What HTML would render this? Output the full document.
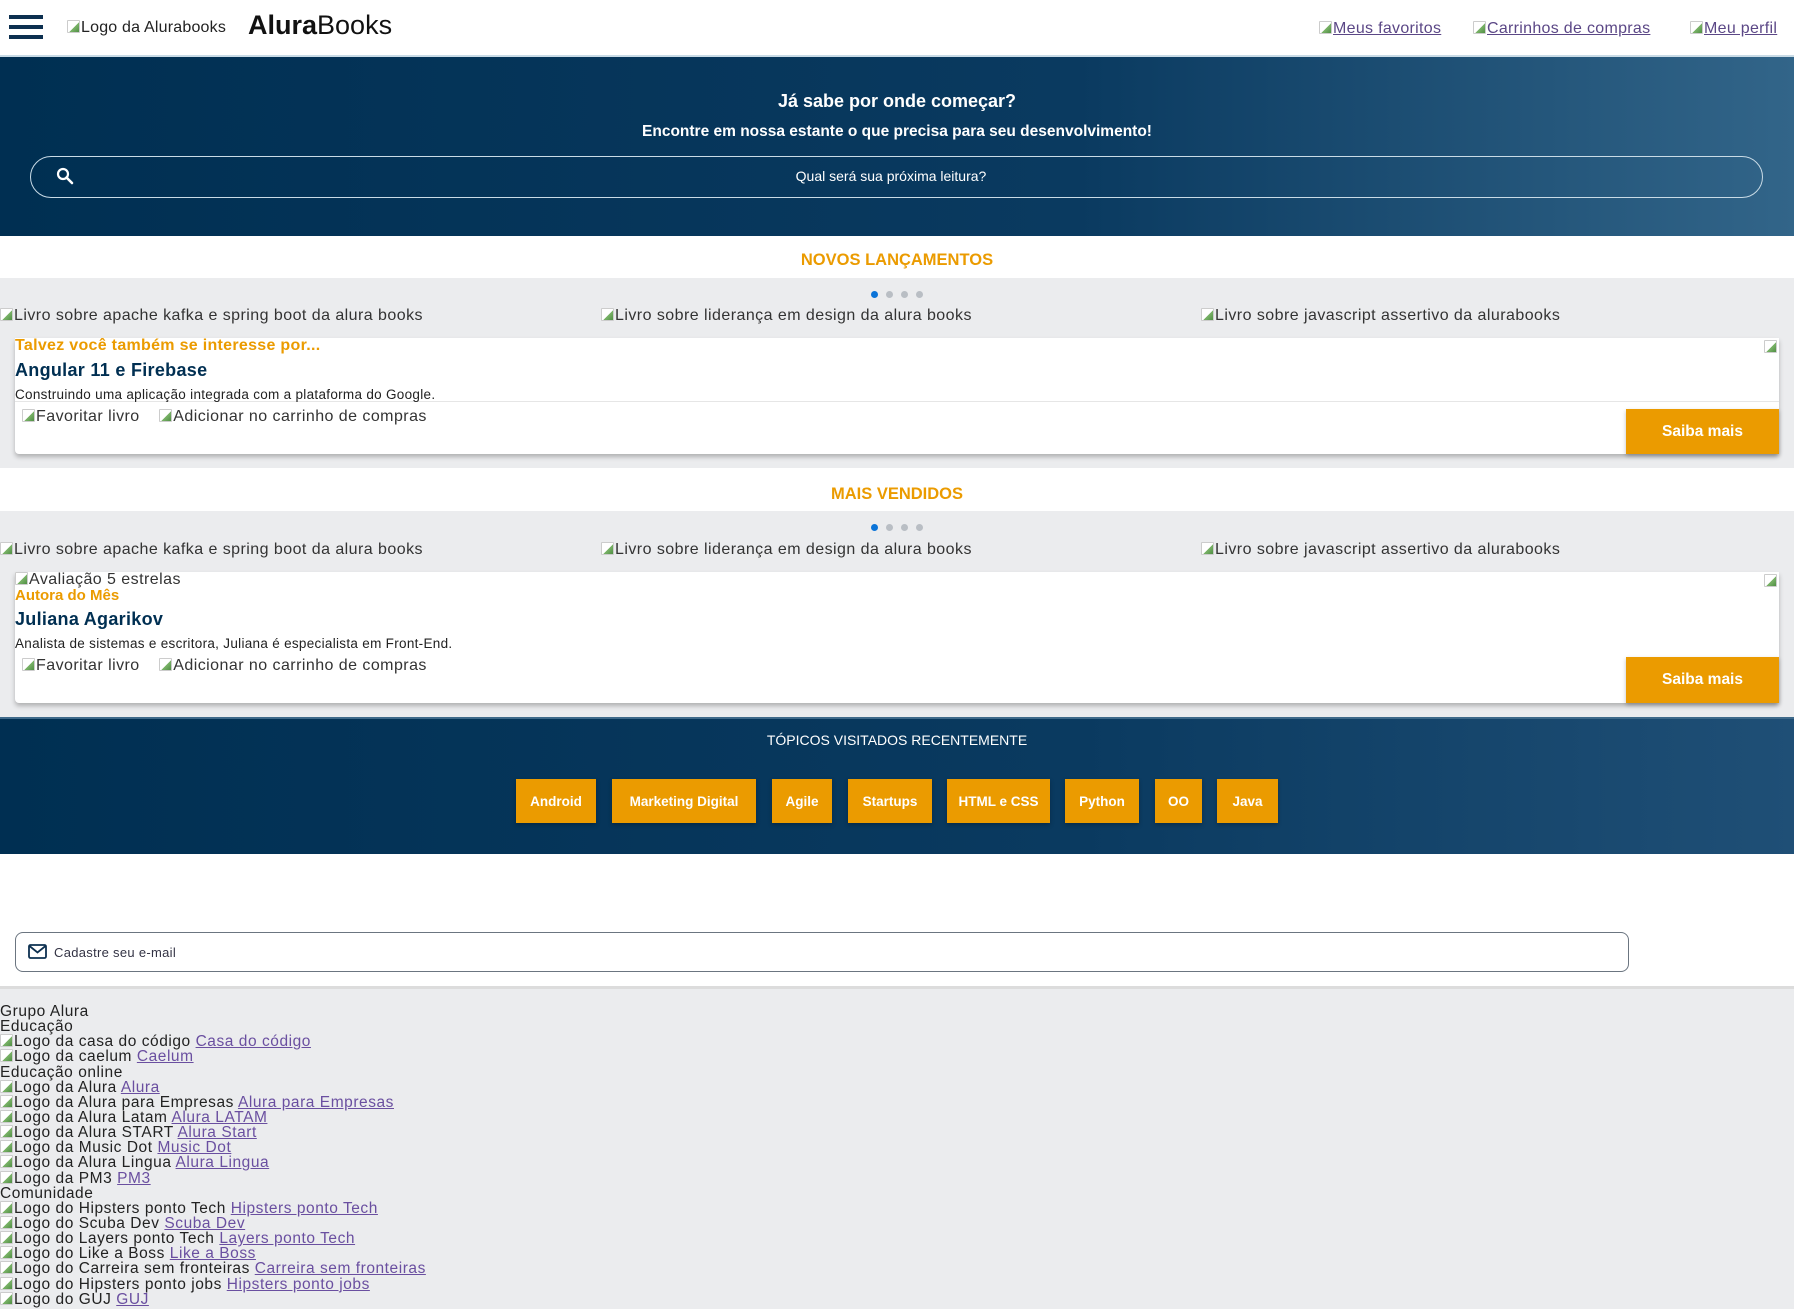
<!DOCTYPE html>
<html><head><meta charset="utf-8">
<style>
*{margin:0;padding:0;box-sizing:border-box}
body{width:1794px;height:1309px;overflow:hidden;background:#fff;font-family:"Liberation Sans",sans-serif;color:#222;position:relative}
.a{position:absolute;white-space:nowrap}
.bi{display:inline-block;width:13px;height:13px;vertical-align:-1px;margin-right:1px;background:linear-gradient(135deg,#fff 55%,#7cb46a 56%,#4f8f43);border:1px solid #ccc;border-radius:1px}
.band{position:absolute;left:0;width:1794px}
.lnk{color:#5b4786;text-decoration:underline;font-size:16px;letter-spacing:.3px}
.card{position:absolute;left:15px;width:1764px;background:#fff;box-shadow:0 3px 5px rgba(0,0,0,.25);border-radius:0 0 4px 4px}
.btn{position:absolute;background:#eb9b00;color:#fff;font-weight:bold;display:flex;align-items:center;justify-content:center;box-shadow:0 2px 4px rgba(0,0,0,.25)}
.sec{position:absolute;left:0;width:1794px;text-align:center;color:#eb9b00;font-weight:bold;font-size:16.5px}
.dot{position:absolute;width:7px;height:7px;border-radius:50%;background:#b9bec4}
.alt{font-size:16px;color:#333;letter-spacing:.45px}
.orange{color:#eb9b00;font-weight:bold}
.title{color:#002f52;font-weight:bold;font-size:18px;letter-spacing:.3px}
.desc{font-size:13.5px;color:#222;letter-spacing:.3px}
.ft{position:absolute;left:0;top:1004px;font-size:15.5px;color:#222;letter-spacing:.55px}
.ft div{height:15.15px;line-height:15px;white-space:nowrap}
.ft a{color:#6a4fa0;text-decoration:underline}
</style></head><body>
<!-- header -->
<div class="a" style="left:9px;top:15px;width:34px;height:4px;background:#0d3050"></div>
<div class="a" style="left:9px;top:25px;width:34px;height:4px;background:#0d3050"></div>
<div class="a" style="left:9px;top:35px;width:34px;height:4px;background:#0d3050"></div>
<div class="a" style="left:67px;top:19px;font-size:16px;color:#222;letter-spacing:.2px"><span class="bi"></span>Logo da Alurabooks</div>
<div class="a" style="left:248px;top:10px;font-size:27px;color:#111"><b>Alura</b>Books</div>
<div class="a" style="left:1319px;top:20px"><span class="bi"></span><span class="lnk">Meus favoritos</span></div>
<div class="a" style="left:1473px;top:20px"><span class="bi"></span><span class="lnk">Carrinhos de compras</span></div>
<div class="a" style="left:1690px;top:20px"><span class="bi"></span><span class="lnk">Meu perfil</span></div>
<!-- hero -->
<div class="band" style="top:55px;height:181px;background:linear-gradient(90deg,#002f52 0%,#0a3a60 60%,#326589 100%);border-top:2px solid #c9dbe6"></div>
<div class="a" style="left:0;width:1794px;top:91px;text-align:center;color:#fff;font-weight:bold;font-size:18px">Já sabe por onde começar?</div>
<div class="a" style="left:0;width:1794px;top:123px;text-align:center;color:#fff;font-weight:bold;font-size:15.5px">Encontre em nossa estante o que precisa para seu desenvolvimento!</div>
<div class="a" style="left:30px;top:156px;width:1733px;height:42px;border:1.5px solid #c9dbe6;border-radius:21px"></div>
<svg class="a" style="left:56px;top:167px" width="18" height="18" viewBox="0 0 18 18"><circle cx="7" cy="7" r="5" fill="none" stroke="#fff" stroke-width="2.2"/><path d="M10.5 10.5L16 16" stroke="#fff" stroke-width="2.6" stroke-linecap="round"/></svg>
<div class="a" style="left:0;width:1782px;top:168px;text-align:center;color:#fff;font-size:14px">Qual será sua próxima leitura?</div>
<!-- novos -->
<div class="sec" style="top:251px">NOVOS LANÇAMENTOS</div>
<div class="band" style="top:278px;height:190px;background:#ebecee"></div>
<div class="dot" style="left:871px;top:291px;background:#0b74d8"></div><div class="dot" style="left:886px;top:291px"></div><div class="dot" style="left:901px;top:291px"></div><div class="dot" style="left:916px;top:291px"></div>
<div class="a alt" style="left:0;top:307px"><span class="bi"></span>Livro sobre apache kafka e spring boot da alura books</div>
<div class="a alt" style="left:601px;top:307px"><span class="bi"></span>Livro sobre liderança em design da alura books</div>
<div class="a alt" style="left:1201px;top:307px"><span class="bi"></span>Livro sobre javascript assertivo da alurabooks</div>
<div class="card" style="top:338px;height:116px"></div>
<div class="a" style="left:15px;top:401px;width:1764px;height:1px;background:#e6e6e6"></div>
<div class="a" style="left:1764px;top:339px"><span class="bi"></span></div>
<div class="a orange" style="left:15px;top:337px;font-size:16px;letter-spacing:.3px">Talvez você também se interesse por...</div>
<div class="a title" style="left:15px;top:360px">Angular 11 e Firebase</div>
<div class="a desc" style="left:15px;top:387px">Construindo uma aplicação integrada com a plataforma do Google.</div>
<div class="a alt" style="left:22px;top:408px"><span class="bi"></span>Favoritar livro&nbsp;&nbsp;&nbsp; <span class="bi"></span>Adicionar no carrinho de compras</div>
<div class="btn" style="left:1626px;top:409px;width:153px;height:45px;font-size:15.5px">Saiba mais</div>
<!-- mais vendidos -->
<div class="sec" style="top:485px">MAIS VENDIDOS</div>
<div class="band" style="top:511px;height:206px;background:#ebecee"></div>
<div class="dot" style="left:871px;top:524px;background:#0b74d8"></div><div class="dot" style="left:886px;top:524px"></div><div class="dot" style="left:901px;top:524px"></div><div class="dot" style="left:916px;top:524px"></div>
<div class="a alt" style="left:0;top:541px"><span class="bi"></span>Livro sobre apache kafka e spring boot da alura books</div>
<div class="a alt" style="left:601px;top:541px"><span class="bi"></span>Livro sobre liderança em design da alura books</div>
<div class="a alt" style="left:1201px;top:541px"><span class="bi"></span>Livro sobre javascript assertivo da alurabooks</div>
<div class="card" style="top:572px;height:131px"></div>
<div class="a" style="left:1764px;top:573px"><span class="bi"></span></div>
<div class="a alt" style="left:15px;top:571px"><span class="bi"></span>Avaliação 5 estrelas</div>
<div class="a orange" style="left:15px;top:587px;font-size:15px">Autora do Mês</div>
<div class="a title" style="left:15px;top:609px">Juliana Agarikov</div>
<div class="a desc" style="left:15px;top:636px">Analista de sistemas e escritora, Juliana é especialista em Front-End.</div>
<div class="a alt" style="left:22px;top:657px"><span class="bi"></span>Favoritar livro&nbsp;&nbsp;&nbsp; <span class="bi"></span>Adicionar no carrinho de compras</div>
<div class="btn" style="left:1626px;top:657px;width:153px;height:46px;font-size:15.5px">Saiba mais</div>
<!-- topics -->
<div class="band" style="top:717px;height:137px;background:linear-gradient(90deg,#002f52 0%,#0a3a60 60%,#1f4f76 100%);border-top:2px solid #3f6a8a"></div>
<div class="a" style="left:0;width:1794px;top:732px;text-align:center;color:#fff;font-size:14px">TÓPICOS VISITADOS RECENTEMENTE</div>
<div class="btn" style="left:516px;top:779px;width:80px;height:44px;font-size:13.5px">Android</div>
<div class="btn" style="left:612px;top:779px;width:144px;height:44px;font-size:13.5px">Marketing Digital</div>
<div class="btn" style="left:772px;top:779px;width:60px;height:44px;font-size:13.5px">Agile</div>
<div class="btn" style="left:848px;top:779px;width:84px;height:44px;font-size:13.5px">Startups</div>
<div class="btn" style="left:947px;top:779px;width:103px;height:44px;font-size:13.5px">HTML e CSS</div>
<div class="btn" style="left:1065px;top:779px;width:74px;height:44px;font-size:13.5px">Python</div>
<div class="btn" style="left:1155px;top:779px;width:47px;height:44px;font-size:13.5px">OO</div>
<div class="btn" style="left:1217px;top:779px;width:61px;height:44px;font-size:13.5px">Java</div>
<!-- email -->
<div class="a" style="left:15px;top:932px;width:1614px;height:40px;border:1.5px solid #6b7580;border-radius:8px"></div>
<svg class="a" style="left:28px;top:944px" width="19" height="15" viewBox="0 0 19 15"><rect x="1" y="1" width="17" height="13" rx="1.5" fill="none" stroke="#0d3050" stroke-width="1.8"/><path d="M1.5 2L9.5 8.5L17.5 2" fill="none" stroke="#0d3050" stroke-width="1.8"/></svg>
<div class="a" style="left:54px;top:945px;font-size:13px;color:#334;letter-spacing:.3px">Cadastre seu e-mail</div>
<!-- footer -->
<div class="band" style="top:986px;height:323px;background:#ebecee;border-top:3px solid #dcdcdc"></div>
<div class="ft">
<div>Grupo Alura</div><div>Educação</div>
<div><span class="bi"></span>Logo da casa do código <a>Casa do código</a></div>
<div><span class="bi"></span>Logo da caelum <a>Caelum</a></div>
<div>Educação online</div>
<div><span class="bi"></span>Logo da Alura <a>Alura</a></div>
<div><span class="bi"></span>Logo da Alura para Empresas <a>Alura para Empresas</a></div>
<div><span class="bi"></span>Logo da Alura Latam <a>Alura LATAM</a></div>
<div><span class="bi"></span>Logo da Alura START <a>Alura Start</a></div>
<div><span class="bi"></span>Logo da Music Dot <a>Music Dot</a></div>
<div><span class="bi"></span>Logo da Alura Lingua <a>Alura Lingua</a></div>
<div><span class="bi"></span>Logo da PM3 <a>PM3</a></div>
<div>Comunidade</div>
<div><span class="bi"></span>Logo do Hipsters ponto Tech <a>Hipsters ponto Tech</a></div>
<div><span class="bi"></span>Logo do Scuba Dev <a>Scuba Dev</a></div>
<div><span class="bi"></span>Logo do Layers ponto Tech <a>Layers ponto Tech</a></div>
<div><span class="bi"></span>Logo do Like a Boss <a>Like a Boss</a></div>
<div><span class="bi"></span>Logo do Carreira sem fronteiras <a>Carreira sem fronteiras</a></div>
<div><span class="bi"></span>Logo do Hipsters ponto jobs <a>Hipsters ponto jobs</a></div>
<div><span class="bi"></span>Logo do GUJ <a>GUJ</a></div>
</div>
</body></html>
